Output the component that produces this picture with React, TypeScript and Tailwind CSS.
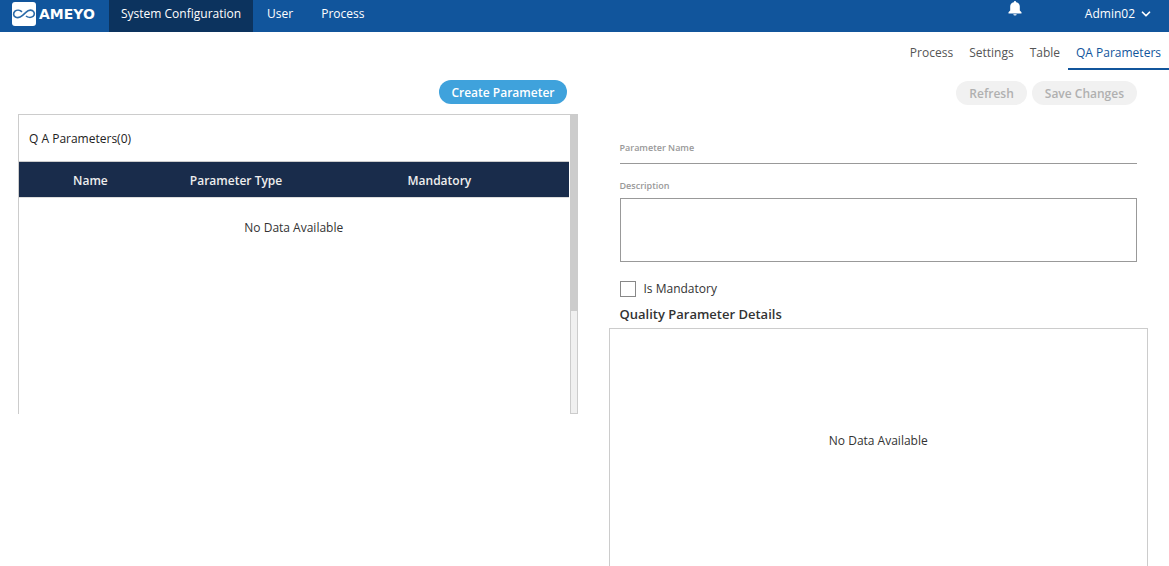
import { ChevronDown } from 'lucide-react';

const mainTabs = ['System Configuration', 'User', 'Process'];
const subTabs = ['Process', 'Settings', 'Table', 'QA Parameters'];

const Logo = () => (
  <a href="#" className="flex w-[109px] items-center gap-[3px] pl-3 pb-1 text-white">
    <svg width="24" height="24" viewBox="0 0 24 24" className="shrink-0">
      <rect width="24" height="24" rx="3" fill="#fff" />
      <path
        d="M10 9.800C8 8 4.800 7.800 3 9.200C1 11 1.200 13.800 3.400 15C5.600 16.200 8.400 15.400 10.600 13.400L13.600 10.600C15.800 8.400 18.600 7.600 20.800 8.800C22.800 10.200 22.800 12.800 21 14.400C19 15.800 15.800 15.600 14 14"
        fill="none"
        stroke="#2a6aa8"
        strokeWidth="1.6"
      />
    </svg>
    <span className="font-['DejaVu_Sans',sans-serif] text-[14px] leading-4 font-bold">AMEYO</span>
  </a>
);

const Header = () => (
  <header className="flex h-8 shrink-0 bg-[#11559c] text-[12px] text-white">
    <Logo />
    <nav className="flex">
      {mainTabs.map((tab, i) => (
        <a
          key={tab}
          href="#"
          className={`flex items-center pb-1 ${i === 0 ? 'bg-[#0c335e] px-3' : 'px-[14px]'}`}
        >
          {tab}
        </a>
      ))}
    </nav>
    <div className="ml-auto flex items-start pr-4">
      <button type="button" aria-label="Notifications" className="mr-[63px]">
        <svg width="14" height="16" viewBox="0 0 14 16" fill="#fff">
          <path d="M7 1A1.200 1.200 0 0 0 5.800 2.200C3.400 2.700 2.200 4.400 2.200 6.600V10.600L.5 12.300V13.500H13.500V12.300L11.800 10.600V6.600C11.800 4.400 10.600 2.700 8.200 2.200A1.200 1.200 0 0 0 7 1ZM5.300 14.300a1.700 1.200 0 0 0 3.400 0Z" />
        </svg>
      </button>
      <button type="button" className="flex h-7 items-center gap-1">
        Admin02
        <ChevronDown size={14} strokeWidth={3} />
      </button>
    </div>
  </header>
);

const SubNav = () => (
  <nav className="flex h-[38px] shrink-0 justify-end text-[12px] text-[#555]">
    {subTabs.map((tab) => (
      <a
        key={tab}
        href="#"
        className={`flex items-center border-b-2 px-2 pt-1.5 ${
          tab === 'QA Parameters' ? 'border-[#11559c] text-[#11559c]' : 'border-transparent'
        }`}
      >
        {tab}
      </a>
    ))}
  </nav>
);

const ParameterList = () => (
  <section className="pl-[18px] pr-[7px] pt-[10px]">
    <div className="flex justify-end pr-[11px]">
      <button
        type="button"
        className="h-6 rounded-full bg-[#3fa2dc] px-3 pt-px text-[12px] font-semibold text-white"
      >
        Create Parameter
      </button>
    </div>
    <div className="mt-[10px] flex h-[300px]">
      <div className="flex-1 border-t border-l border-[#ccc] pr-px">
        <h2 className="flex h-[46px] items-center px-[10px] pt-0.5 text-[12px] text-[#222]">
          Q A Parameters(0)
        </h2>
        <table className="w-full table-fixed text-[12px]">
          <thead>
            <tr className="h-9 border-t border-b border-t-[#ccc] border-b-[#ddd] bg-[#192c4b] text-[#eee]">
              <th className="w-[26%] pt-0.5 font-semibold">Name</th>
              <th className="w-[27%] pt-0.5 font-semibold">Parameter Type</th>
              <th className="pt-0.5 font-semibold">Mandatory</th>
            </tr>
          </thead>
          <tbody>
            <tr>
              <td colSpan={3} className="h-[60px] text-center text-[#333]">
                No Data Available
              </td>
            </tr>
          </tbody>
        </table>
      </div>
      <div className="w-2 border border-[#ccc] bg-[#f0f0f0]">
        <div className="h-[196px] bg-[#ccc]" />
      </div>
    </div>
  </section>
);

const ParameterForm = () => (
  <section className="flex flex-col pl-6 pr-[21px] pt-[11px]">
    <div className="flex justify-end gap-[5px] pr-[11px] text-[12px] font-semibold text-[#b0b0b0]">
      <button type="button" className="h-6 rounded-full bg-[#f1f1f1] px-[13px] pt-px">
        Refresh
      </button>
      <button type="button" className="h-6 rounded-full bg-[#f1f1f1] px-[13px] pt-px">
        Save Changes
      </button>
    </div>
    <div className="flex flex-col px-[11px] pt-[35px]">
      <label htmlFor="name" className="text-[9px] leading-4 font-semibold text-[#999]">
        Parameter Name
      </label>
      <input id="name" type="text" className="h-2 border-b border-[#999] text-[12px] outline-none" />
      <label htmlFor="description" className="mt-[14px] text-[9px] leading-4 font-semibold text-[#999]">
        Description
      </label>
      <textarea
        id="description"
        className="mt-1 h-16 resize-none border border-[#999] p-2 text-[12px] outline-none"
      />
      <label className="mt-[17px] flex items-center gap-2 text-[12px] leading-5 text-[#333]">
        <input type="checkbox" className="size-4 appearance-none border border-[#888]" />
        Is Mandatory
      </label>
      <h2 className="mt-[5px] mb-1 text-[13px] leading-5 font-semibold text-[#333]">
        Quality Parameter Details
      </h2>
    </div>
    <div className="flex-1 border-x border-t border-[#ccc] pt-[102px] text-center text-[12px] leading-5 text-[#333]">
      No Data Available
    </div>
  </section>
);

const App = () => (
  <div className="flex h-screen flex-col overflow-hidden bg-white font-['Open_Sans',sans-serif]">
    <Header />
    <SubNav />
    <main className="grid flex-1 grid-cols-2">
      <ParameterList />
      <ParameterForm />
    </main>
  </div>
);

export default App;
